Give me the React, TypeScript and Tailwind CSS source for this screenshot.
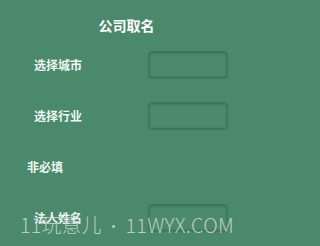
import React from 'react';

const font = { fontFamily: '"Noto Sans CJK SC", "Noto Sans", sans-serif' };

function Field({ label }: { label: string }) {
  return (
    <div className="flex h-[51px] items-center justify-between pl-[34px] pr-[25px]">
      <span className="text-[12px] font-bold text-[#eef5f1]">{label}</span>
      <div className="h-[27px] w-[80px] rounded-[4px] border border-[#3e7559] bg-[#4b8a6c] shadow-[inset_0_1px_3px_rgba(0,0,0,0.25),0_1px_1px_rgba(0,0,0,0.12)]" />
    </div>
  );
}

export default function App() {
  return (
    <div className="relative h-screen min-h-[246px] w-screen min-w-[253px] overflow-hidden bg-[#4b896c]" style={font}>
      <div className="flex w-[253px] flex-col">
        <div className="mt-[18px] flex h-[14px] items-center justify-center text-[14px] font-bold text-white">
          公司取名
        </div>
        <div className="mt-[7px] flex flex-col">
          <Field label="选择城市" />
          <Field label="选择行业" />
          <div className="flex h-[51px] items-center pl-[27px]">
            <span className="text-[12px] font-bold text-[#eef5f1]">非必填</span>
          </div>
          <Field label="法人姓名" />
        </div>
      </div>
      {/* watermark */}
      <div className="pointer-events-none absolute left-[20px] top-[211px] flex items-center whitespace-nowrap text-[20px] font-light leading-[28px] text-[#d4d8d6]/85">
        <span>11玩意儿</span>
        <span className="mx-[4px] text-[16px]">•</span>
        <span className="tracking-[0.2px]">11WYX.COM</span>
      </div>
    </div>
  );
}
